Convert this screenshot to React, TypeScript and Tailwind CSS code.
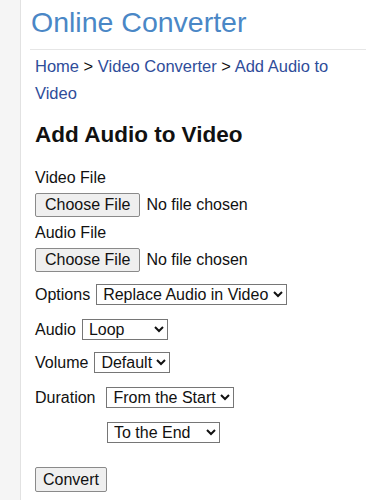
import { useState } from "react"

const selectCls =
  "h-[21px] border border-[#767676] bg-white pl-[2px] text-[16px] leading-[18px] text-[#111]"

const fileCls =
  "mt-[6px] block leading-[18px] file:mr-[6px] file:rounded-[2px] file:border file:border-[#8a8a8a] file:bg-[#efefef] file:px-[9px] file:py-[2px] file:leading-[18px] file:text-[#111]"

const rowCls = "flex h-[21px] items-center leading-[18px]"

export default function App() {
  const [options, setOptions] = useState("replace")
  const [audio, setAudio] = useState("loop")
  const [volume, setVolume] = useState("default")
  const [start, setStart] = useState("start")
  const [end, setEnd] = useState("end")

  return (
    <div className="flex min-h-[500px] bg-white font-['Liberation_Sans',Arial,sans-serif] text-[16px] text-[#111]">
      {/* left rail */}
      <div className="w-[21px] shrink-0 border-r border-[#e2e2e2] bg-[#f5f5f5]" />

      <main className="flex-1 pl-[9px]">
        <h1 className="mt-[6px] pl-[1px] text-[28.5px] leading-[32px] text-[#4a87c6]">Online Converter</h1>
        <hr className="mt-[11px] border-t border-[#e6e6e6]" />

        <div className="pl-[5px]">
          {/* Breadcrumb */}
          <nav className="pr-[20px] pt-[3px] text-[16.5px] leading-[27px]">
            <a className="text-[#2f4d9a]">Home</a> &gt; <a className="text-[#2f4d9a]">Video Converter</a> &gt;{" "}
            <a className="text-[#2f4d9a]">Add Audio to Video</a>
          </nav>

          <h2 className="mt-[15px] text-[22.5px] font-bold leading-[26px] text-[#111]">Add Audio to Video</h2>

          <form onSubmit={(e) => e.preventDefault()}>
            <label className="mt-[21px] block leading-[18px]">Video File</label>
            <input type="file" className={fileCls} />
            <label className="mt-[7px] block leading-[18px]">Audio File</label>
            <input type="file" className={fileCls} />

            <div className={rowCls + " mt-[12px] gap-[6px]"}>
              <span>Options</span>
              <select className={selectCls + " w-[191px]"} value={options} onChange={(e) => setOptions(e.target.value)}>
                <option value="replace">Replace Audio in Video</option>
                <option value="mix">Mix with Video Audio</option>
              </select>
            </div>

            <div className={rowCls + " mt-[14px] gap-[6px]"}>
              <span>Audio</span>
              <select className={selectCls + " w-[86px]"} value={audio} onChange={(e) => setAudio(e.target.value)}>
                <option value="loop">Loop</option>
                <option value="once">Once</option>
              </select>
            </div>

            <div className={rowCls + " mt-[12px] gap-[6px]"}>
              <span>Volume</span>
              <select className={selectCls + " w-[76px]"} value={volume} onChange={(e) => setVolume(e.target.value)}>
                <option value="default">Default</option>
                <option value="louder">Louder</option>
              </select>
            </div>

            <div className={rowCls + " mt-[14px] gap-[11px]"}>
              <span>Duration</span>
              <select className={selectCls + " w-[128px]"} value={start} onChange={(e) => setStart(e.target.value)}>
                <option value="start">From the Start</option>
              </select>
            </div>

            <div className={rowCls + " mt-[14px] pl-[72px]"}>
              <select className={selectCls + " w-[113px]"} value={end} onChange={(e) => setEnd(e.target.value)}>
                <option value="end">To the End</option>
              </select>
            </div>

            <button
              type="submit"
              className="mt-[24px] block rounded-[2px] border border-[#8a8a8a] bg-[#efefef] px-[7px] py-[2px] leading-[19px] text-[#111]"
            >
              Convert
            </button>
          </form>
        </div>
      </main>
    </div>
  )
}
